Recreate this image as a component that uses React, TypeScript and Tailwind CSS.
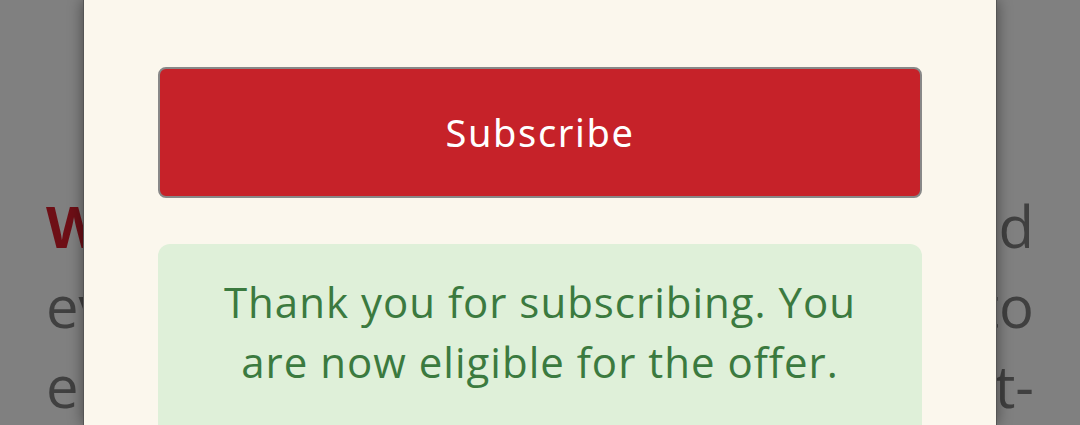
import React from 'react';

const pageLines = [
  { left: 'We', right: 'ed', strong: true },
  { left: 'every', right: 'to', strong: false },
  { left: 'enjoy', right: 'at-', strong: false },
];

export default function App() {
  return (
    <div className="relative h-[425px] w-[1080px] overflow-hidden bg-[#808080] font-['Open_Sans',sans-serif]">
      {/* page behind the dialog */}
      <div className="flex flex-col pt-[186px] px-[46px] text-[58px] leading-[80px] text-[#404040]">
        {pageLines.map((line) => (
          <div key={line.left} className="flex justify-between">
            <span className={line.strong ? 'font-bold text-[#6e0f16]' : ''}>{line.left}</span>
            <span>{line.right}</span>
          </div>
        ))}
      </div>

      {/* dialog */}
      <div className="absolute top-0 bottom-0 left-[83px] w-[914px] border-x border-[#555] bg-[#fbf7ed] shadow-[0_0_14px_rgba(0,0,0,0.45)]">
        <div className="flex flex-col gap-[46px] px-[74px] pt-[67px]">
          <button className="h-[131px] w-full rounded-lg border-2 border-[#888] bg-[#c62229] font-['Noto_Sans',sans-serif] text-[38px] tracking-[1.6px] text-white">
            Subscribe
          </button>
          <div className="h-[200px] rounded-xl bg-[#dff0d9] px-6 pt-[28px] text-center text-[42px] leading-[60px] tracking-[1px] text-[#3b7a3f]">
            Thank you for subscribing. You
            <br />
            are now eligible for the offer.
          </div>
        </div>
      </div>
    </div>
  );
}
